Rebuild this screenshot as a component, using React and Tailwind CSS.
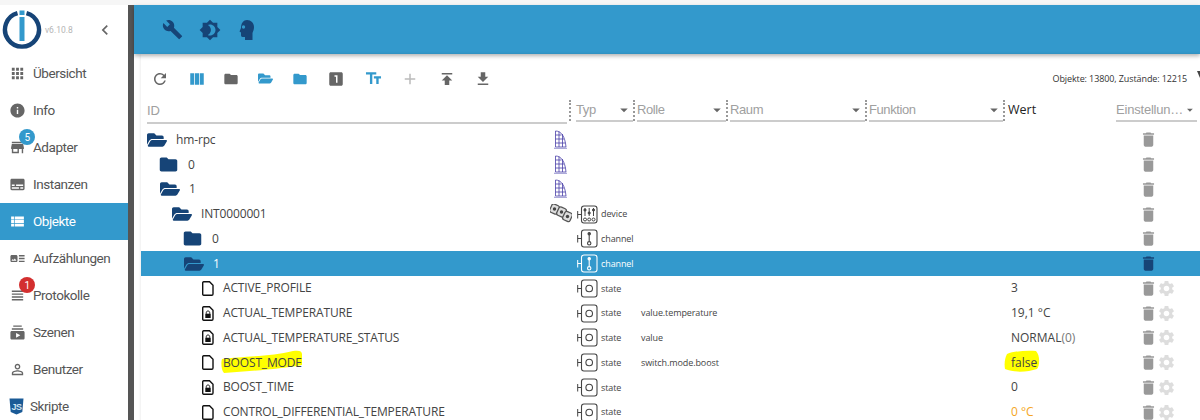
import React from 'react';
import {
  MdApps, MdInfo, MdStore, MdSubtitles, MdViewList, MdArtTrack, MdViewHeadline, MdSubscriptions,
  MdPersonOutline, MdChevronLeft, MdBuild, MdBrightness4, MdRefresh, MdViewColumn, MdFolder,
  MdLooksOne, MdTextFields, MdAdd, MdPublish, MdGetApp, MdDelete, MdSettings, MdArrowDropDown,
} from 'react-icons/md';
import { FaFolderOpen } from 'react-icons/fa';

const navItems = [
  { label: 'Übersicht', icon: MdApps },
  { label: 'Info', icon: MdInfo },
  { label: 'Adapter', icon: MdStore, badge: '5', badgeClass: 'bg-[#3399cc]' },
  { label: 'Instanzen', icon: MdSubtitles },
  { label: 'Objekte', icon: MdViewList, active: true },
  { label: 'Aufzählungen', icon: MdArtTrack },
  { label: 'Protokolle', icon: MdViewHeadline, badge: '1', badgeClass: 'bg-[#d32f2f]' },
  { label: 'Szenen', icon: MdSubscriptions },
  { label: 'Benutzer', icon: MdPersonOutline },
];

const rows = [
  { name: 'hm-rpc', pad: 6, kind: 'open', mark: 'sail' },
  { name: '0', pad: 19, kind: 'closed', mark: 'sail' },
  { name: '1', pad: 19, kind: 'open', mark: 'sail' },
  { name: 'INT0000001', pad: 31, kind: 'open', mark: 'devices', type: 'device' },
  { name: '0', pad: 43, kind: 'closed', type: 'channel' },
  { name: '1', pad: 43, kind: 'open', type: 'channel', selected: true },
  { name: 'ACTIVE_PROFILE', pad: 61, kind: 'file', type: 'state', value: '3', gear: true },
  { name: 'ACTUAL_TEMPERATURE', pad: 61, kind: 'lock', type: 'state', role: 'value.temperature', value: '19,1 °C', gear: true },
  { name: 'ACTUAL_TEMPERATURE_STATUS', pad: 61, kind: 'lock', type: 'state', role: 'value', value: 'NORMAL', suffix: '(0)', gear: true },
  { name: 'BOOST_MODE', pad: 61, kind: 'file', type: 'state', role: 'switch.mode.boost', value: 'false', gear: true, marked: true },
  { name: 'BOOST_TIME', pad: 61, kind: 'lock', type: 'state', value: '0', gear: true },
  { name: 'CONTROL_DIFFERENTIAL_TEMPERATURE', pad: 61, kind: 'file', type: 'state', value: '0 °C', gear: true, warn: true },
];

const filters = [
  { label: 'Typ', cls: 'w-[57px]', gap: 'ml-[5px]' },
  { label: 'Rolle', cls: 'w-[89px]', gap: 'ml-[2px]' },
  { label: 'Raum', cls: 'w-[135px]', gap: 'ml-[2px]' },
  { label: 'Funktion', cls: 'w-[134px]', gap: 'ml-[2px]' },
];

const Logo = () => (
  <svg width="40" height="40" viewBox="0 0 40 40">
    <path d="M15.5 3.2 A17 17 0 1 0 24.5 3.2" fill="none" stroke="#164477" strokeWidth="4.4" />
    <rect x="17.5" y="0.5" width="5" height="4.5" fill="#3399cc" />
    <rect x="17.5" y="7" width="5" height="24" fill="#3399cc" />
  </svg>
);

const JsLogo = () => (
  <svg width="15" height="17" viewBox="0 0 15 17">
    <path d="M0.5 0.5 H14.5 L13.3 14 L7.5 16.5 L1.7 14 Z" fill="#1a5a96" />
    <text x="7.5" y="11.5" textAnchor="middle" fontSize="9" fontWeight="700" fill="#cfe3f2" fontFamily="Liberation Sans, sans-serif">JS</text>
  </svg>
);

const HeadIcon = () => (
  <svg width="16" height="22" viewBox="0 0 16 22">
    <path d="M8 1 C12 1 15 4 15 8 C15 11 14 12.5 13.5 14 V21 H6 V18 H3.5 C2.5 18 2 17 2 16 V13.5 L0.5 12.5 L2 9 C2 4 4.500 1 8 1 Z" fill="#164477" />
    <circle cx="4.500" cy="8" r="1.700" fill="#3399cc" />
  </svg>
);

const FileIcon = ({ locked }) => (
  <svg width="12" height="15" viewBox="0 0 12 15" className="shrink-0">
    <path d="M1.700 0.700 H7.500 L11 4.200 V13 C11 13.700 10.500 14.300 9.800 14.300 H1.700 C1 14.300 0.700 13.700 0.700 13 V2 C0.700 1.200 1 0.700 1.700 0.700 Z" fill="none" stroke="#111" strokeWidth="1.400" />
    {locked && (
      <g fill="#111">
        <rect x="3.300" y="7.700" width="5.400" height="4.300" />
        <path d="M4.300 7.700 V6.500 C4.300 4.500 7.700 4.500 7.700 6.500 V7.700" fill="none" stroke="#111" strokeWidth="1" />
      </g>
    )}
  </svg>
);

const SailIcon = () => (
  <svg width="15" height="20" viewBox="0 0 15 20" fill="none" stroke="#4a40a8" strokeWidth="0.800">
    <path d="M2.500 1 C8 1 12 6 13 17 H2.500 Z M2.500 5 H8.500 M2.500 9 H11 M2.500 13 H12.500 M6 1.500 V17 M9.500 4 V17" />
    <path d="M1 18.300 H14" stroke="#a9a6d8" strokeWidth="1.300" />
  </svg>
);

const DevicesIcon = () => (
  <svg width="22" height="20" viewBox="0 0 22 20">
    <g stroke="#555" strokeWidth="1.300" fill="#ddd">
      <rect x="0.500" y="0.500" width="8" height="9" rx="2" transform="rotate(25 4.500 5)" />
      <rect x="7.500" y="3.500" width="8" height="9" rx="2" transform="rotate(25 11.500 8)" />
      <rect x="13.500" y="8" width="8" height="9" rx="2" transform="rotate(25 17.500 12.500)" />
    </g>
    <g fill="#444">
      <circle cx="4.500" cy="5" r="1.700" />
      <circle cx="11.500" cy="8" r="1.700" />
      <circle cx="17.500" cy="12.500" r="1.700" />
    </g>
  </svg>
);

// little box drawn in the type column, content depends on the object type
const TypeIcon = ({ type, selected }) => {
  const c = selected ? '#ffffff' : '#444444';
  return (
    <svg width="21" height="19" viewBox="0 0 21 19" className="shrink-0" fill="none" stroke={c}>
      <path d="M0.700 6 V13.500 M0.700 9.500 H4" strokeWidth="1" />
      <rect x="4.500" y="1" width="15.500" height="17" rx="2.500" strokeWidth="1.100" />
      {type === 'state' && <circle cx="12.200" cy="9.500" r="3.300" strokeWidth="1.100" />}
      {type === 'channel' && (
        <g strokeWidth="1.100">
          <path d="M12.200 6 V12.500" />
          <circle cx="12.200" cy="4.800" r="1.200" fill={c} />
          <circle cx="12.200" cy="14.300" r="1.700" />
        </g>
      )}
      {type === 'device' && (
        <g strokeWidth="1">
          <path d="M8 3 V11 M12.200 3 V11 M16.500 3 V11" />
          <circle cx="8" cy="5" r="1.100" fill={c} />
          <circle cx="12.200" cy="8" r="1.100" fill={c} />
          <circle cx="16.500" cy="5" r="1.100" fill={c} />
          <circle cx="8" cy="14.500" r="1.500" />
          <circle cx="12.200" cy="14.500" r="1.500" />
          <circle cx="16.500" cy="14.500" r="1.500" />
        </g>
      )}
    </svg>
  );
};

const RowIcon = ({ kind }) => {
  if (kind === 'open') return <FaFolderOpen size={20} className="shrink-0 text-[#164477]" />;
  if (kind === 'closed') return <MdFolder size={21} className="shrink-0 text-[#164477] -ml-[2px]" />;
  return <FileIcon locked={kind === 'lock'} />;
};

const Row = ({ row }) => (
  <div className={`flex h-[24.75px] items-center text-[12px] ${row.selected ? 'bg-[#3399cc] text-white' : 'text-[#444]'}`}>
    <div className="flex w-[436px] shrink-0 items-center" style={{ paddingLeft: row.pad }}>
      <RowIcon kind={row.kind} />
      <span className="relative ml-[9px] whitespace-nowrap tracking-[-0.15px]">
        {row.marked && (
          <svg width="82" height="24" viewBox="0 0 82 24" className="absolute -left-[2px] -top-[4px]">
            <path d="M1 9 C20 6 50 7 72 1 C78 0 81 1 81 4 L81 15 C60 19 30 21 3 23 C0 20 0 12 1 9 Z" fill="#ffff00" />
          </svg>
        )}
        <span className="relative">{row.name}</span>
      </span>
      {row.mark && (
        <span className={`ml-auto flex justify-end ${row.mark === 'devices' ? 'pr-[5px]' : 'pr-[9px]'}`}>
          {row.mark === 'sail' ? <SailIcon /> : <DevicesIcon />}
        </span>
      )}
    </div>
    <div className="flex w-[64px] shrink-0 items-center gap-[3px] text-[9px] tracking-[-0.1px]">
      {row.type && <TypeIcon type={row.type} selected={row.selected} />}
      {row.type}
    </div>
    <div className="w-[370px] shrink-0 text-[9px] tracking-[-0.1px]">{row.role}</div>
    <div className={`relative w-[128px] shrink-0 text-[12px] ${row.warn ? 'text-[#f5a623]' : ''}`}>
      {row.marked && (
        <svg width="36" height="24" viewBox="0 0 36 24" className="absolute -left-[7px] -top-[5px]">
          <path d="M3 5 C10 2 24 1 32 2 C36 6 36 16 33 20 C24 23 10 24 1 20 C0 14 1 9 3 5 Z" fill="#ffff00" />
        </svg>
      )}
      <span className="relative">{row.value}</span>
      {row.suffix && <span className="relative text-[#777]">{row.suffix}</span>}
    </div>
    <div className="flex items-center">
      <MdDelete size={19} className={row.selected ? 'text-[#164477]' : 'text-[#999]'} />
      {row.gear && <MdSettings size={19} className="text-[#ddd] ml-[-1px]" />}
    </div>
  </div>
);

const Sep = () => <div className="h-[21px] w-0 shrink-0 self-start border-l-2 border-dotted border-[#999]" />;

export default function App() {
  const toolbar = [
    { icon: MdRefresh, cls: 'text-[#666]', size: 18 },
    { icon: MdViewColumn, cls: 'text-[#3399cc] scale-x-90', size: 20 },
    { icon: MdFolder, cls: 'text-[#666] -ml-[6px]', size: 16 },
    { icon: FaFolderOpen, cls: 'text-[#3399cc] -ml-[10px]', size: 15 },
    { icon: MdFolder, cls: 'text-[#3399cc] -ml-[14px]', size: 16 },
    { icon: MdLooksOne, cls: 'text-[#666] -ml-[16px]', size: 18 },
    { icon: MdTextFields, cls: 'text-[#3399cc] -ml-[14px]', size: 19 },
    { icon: MdAdd, cls: 'text-[#bbb] -ml-[14px]', size: 18 },
    { icon: MdPublish, cls: 'text-[#666] -ml-[14px]', size: 18 },
    { icon: MdGetApp, cls: 'text-[#666] -ml-[16px]', size: 18 },
  ];

  return (
    <div className="flex h-[420px] w-[1200px] flex-col overflow-hidden bg-white font-['Open_Sans',sans-serif]">
      <div className="h-[5px] shrink-0 bg-[#f6f6f6]" />
      <div className="flex min-h-0 flex-1">
        {/* Sidebar */}
        <aside className="w-[128px] shrink-0 bg-white font-['Roboto',sans-serif]">
          <div className="flex h-[50px] items-center pl-[2px]">
            <Logo />
            <span className="ml-[3px] text-[8.5px] text-[#b5b5b5]">v6.10.8</span>
            <MdChevronLeft size={20} className="ml-[22px] text-[#666]" />
          </div>
          {navItems.map((item) => (
            <div
              key={item.label}
              className={`relative flex h-[37px] items-center pl-[9px] text-[13.5px] tracking-[-0.45px] ${item.active ? 'bg-[#3399cc] text-white' : 'text-[#555]'}`}
            >
              <item.icon size={17} className={`w-[17px] ${item.active ? 'text-white' : 'text-[#666]'}`} />
              <span className="ml-[7px]">{item.label}</span>
              {item.badge && (
                <span className={`absolute left-[19px] top-0 flex h-[16px] w-[16px] items-center justify-center rounded-full text-[10px] text-white ${item.badgeClass}`}>
                  {item.badge}
                </span>
              )}
            </div>
          ))}
          <div className="flex h-[37px] items-center pl-[9px] text-[13.5px] tracking-[-0.45px] text-[#555]">
            <JsLogo />
            <span className="ml-[6px]">Skripte</span>
          </div>
        </aside>
        <div className="w-[6px] shrink-0 bg-[#555]" />

        {/* Main */}
        <main className="min-w-0 flex-1 bg-white">
          <div className="flex h-[49px] items-center bg-[#3399cc] pl-[20px] shadow-[0_2px_4px_rgba(0,0,0,0.3)]">
            <div className="flex w-[37px] justify-center"><MdBuild size={21} className="text-[#164477]" /></div>
            <div className="flex w-[37px] justify-center"><MdBrightness4 size={22} className="text-[#164477]" /></div>
            <div className="flex w-[37px] justify-center"><HeadIcon /></div>
          </div>

          <div className="ml-[7px] shadow-[0_0_3px_rgba(0,0,0,0.12)]">
            <div className="flex h-[37px] items-end">
              <div className="flex h-[25px] w-full items-center pl-[1px]">
                {toolbar.map((t, i) => (
                  <div key={i} className="flex w-[36.7px] justify-center">
                    <t.icon size={t.size} className={t.cls} />
                  </div>
                ))}
                <span className="ml-auto mr-[10px] text-[9px] tracking-[-0.1px] text-[#333]">Objekte: 13800, Zustände: 12215</span>
                <svg width="3" height="8" viewBox="0 0 3 8" className="-mt-[8px] shrink-0"><path d="M0 0 L3 0 L3 7 Z" fill="#444" /></svg>
              </div>
            </div>
            <div className="flex h-[36.6px] items-start pl-[6px] pt-[9px] font-['Liberation_Sans',sans-serif] text-[13px] text-[#a0a0a0]">
              <div className="h-[24px] w-[420px] shrink-0 border-b-2 border-[#ccc] leading-[22px]">ID</div>
              <span className="w-[2px]" />
              {filters.map((f) => (
                <React.Fragment key={f.label}>
                  <Sep />
                  <div className={`${f.gap} flex h-[22px] ${f.cls} shrink-0 items-center justify-between border-b-2 border-[#ccc] tracking-[-0.4px]`}>
                    {f.label}
                    <MdArrowDropDown size={18} className="text-[#666]" />
                  </div>
                </React.Fragment>
              ))}
              <Sep />
              <div className="ml-[3px] w-[108px] shrink-0 font-['Open_Sans',sans-serif] text-[12.5px] leading-[20px] text-[#222]">Wert</div>
              <div className="flex h-[22px] w-[81px] shrink-0 items-center justify-between whitespace-nowrap border-b-2 border-[#ccc] tracking-[-0.2px]">
                Einstellun…
                <MdArrowDropDown size={18} className="text-[#666]" />
              </div>
            </div>
            {rows.map((row, i) => (
              <Row key={i} row={row} />
            ))}
          </div>
        </main>
      </div>
    </div>
  );
}
